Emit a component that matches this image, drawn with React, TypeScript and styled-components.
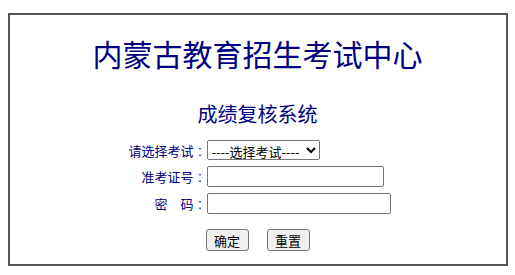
import React from 'react';
import styled, { createGlobalStyle } from 'styled-components';

const GlobalStyle = createGlobalStyle`
  html, body {
    margin: 0;
    padding: 0;
    background: #fff;
  }
  body {
    font-family: "Noto Sans CJK SC", "Liberation Sans", sans-serif;
  }
`;

const Frame = styled.div`
  box-sizing: border-box;
  width: 500px;
  height: 253px;
  margin: 13px auto 0;
  border: 2px solid #555;
  display: flex;
  flex-direction: column;
  align-items: center;
`;

const Title = styled.h1`
  margin: 18px 0 0;
  font-size: 30px;
  font-weight: normal;
  line-height: 40px;
  color: #000080;
`;

const SubTitle = styled.h2`
  margin: 28px 0 0;
  font-size: 20px;
  font-weight: normal;
  line-height: 26px;
  color: #000080;
`;

const FormGrid = styled.div`
  margin-top: 13px;
  align-self: stretch;
  display: grid;
  grid-template-columns: 197px auto;
  row-gap: 6px;
  align-items: center;
`;

const Label = styled.label`
  justify-self: end;
  display: flex;
  align-items: baseline;
  font-size: 13px;
  color: #000080;
  white-space: pre;
`;

const Colon = styled.span`
  width: 13px;
  text-align: center;
  font-size: 14px;
  font-family: "Liberation Sans", sans-serif;
`;

const Field = styled.div`
  display: flex;
  align-items: center;
`;

const Select = styled.select`
  box-sizing: border-box;
  width: 113px;
  height: 20px;
  font-size: 13px;
  font-family: "Noto Sans CJK SC", sans-serif;
  padding: 0;
  color: #000;
`;

const TextInput = styled.input<{ $w: number }>`
  box-sizing: border-box;
  width: ${({ $w }) => $w}px;
  height: 21px;
  border: 1px solid #767676;
  border-radius: 2px;
  padding: 1px 2px;
`;

const Buttons = styled.div`
  margin-top: 15px;
  display: flex;
  gap: 18px;
`;

const Btn = styled.button`
  box-sizing: border-box;
  width: 43px;
  height: 22px;
  padding: 0;
  font-size: 13px;
  font-family: "Noto Sans CJK SC", sans-serif;
  background: #efefef;
  border: 1px solid #767676;
  border-radius: 3px;
  color: #000;
`;

const App = () => {
  return (
    <>
      <GlobalStyle />
      <Frame>
        <Title>内蒙古教育招生考试中心</Title>
        <SubTitle>成绩复核系统</SubTitle>
        <FormGrid>
          <Label>
            请选择考试<Colon>:</Colon>
          </Label>
          <Field>
            <Select defaultValue="">
              <option value="">----选择考试----</option>
            </Select>
          </Field>
          <Label>
            准考证号<Colon>:</Colon>
          </Label>
          <Field>
            <TextInput type="text" $w={177} />
          </Field>
          <Label>
            密　码<Colon>:</Colon>
          </Label>
          <Field>
            <TextInput type="password" $w={184} />
          </Field>
        </FormGrid>
        <Buttons>
          <Btn type="button">确定</Btn>
          <Btn type="reset">重置</Btn>
        </Buttons>
      </Frame>
    </>
  );
};

export default App;
